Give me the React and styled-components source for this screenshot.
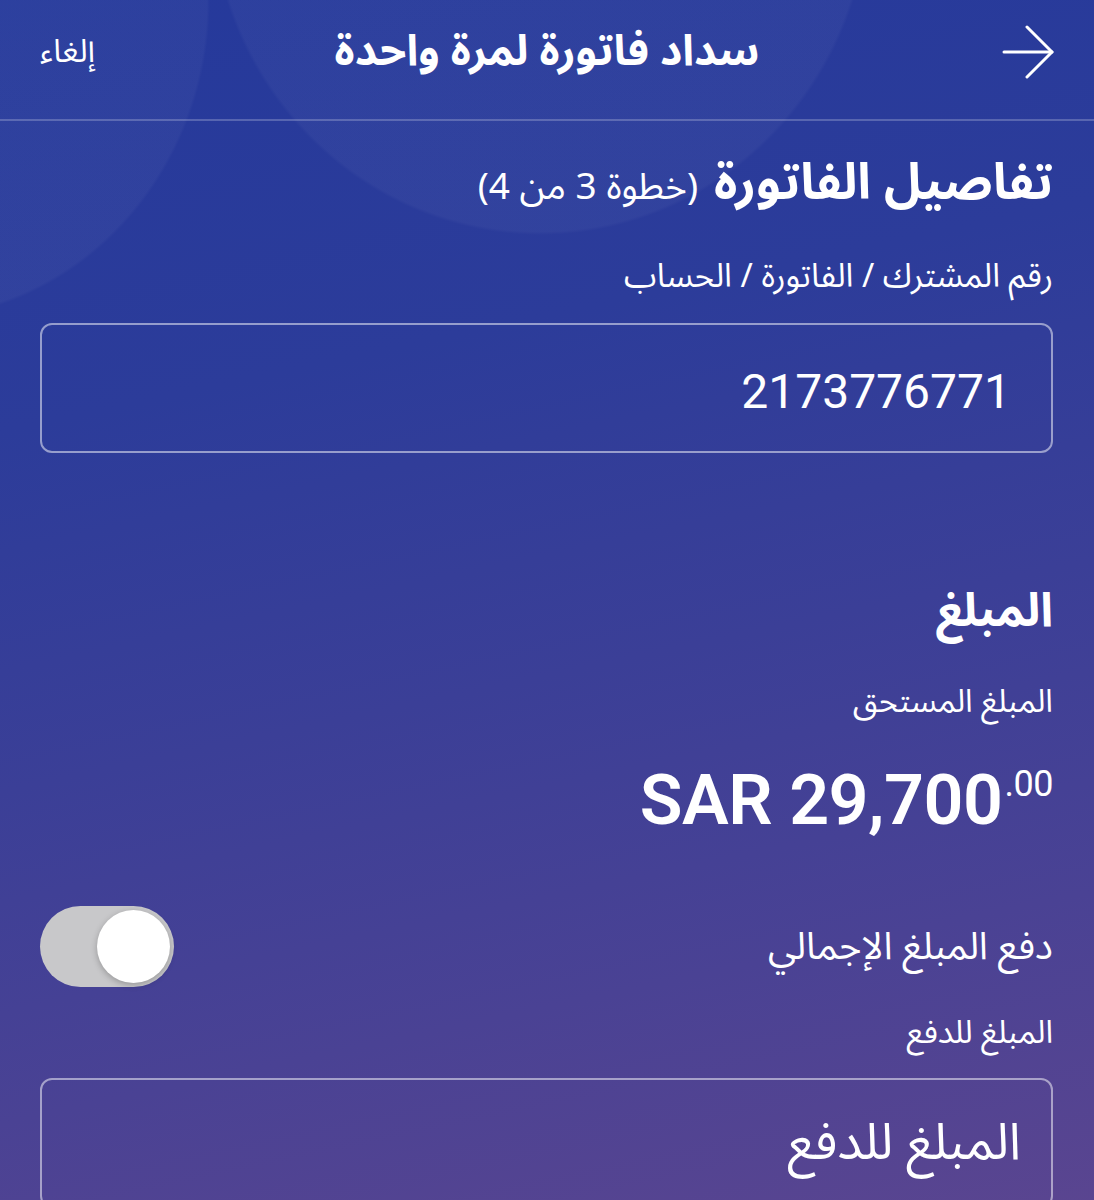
import React from 'react';
import styled, { createGlobalStyle } from 'styled-components';

const arabic = `"Noto Sans Arabic", "Noto Naskh Arabic", "DejaVu Sans", sans-serif`;

const GlobalStyle = createGlobalStyle`
    html, body {
        margin: 0;
        padding: 0;
        background: #3a3f98;
    }
    * {
        box-sizing: border-box;
    }
`;

const Screen = styled.div`
    direction: rtl;
    position: relative;
    overflow: hidden;
    width: 1094px;
    min-height: 1200px;
    color: #ffffff;
    font-family: ${arabic};
    background:
        radial-gradient(ellipse 330px 340px at 540px -105px, rgba(255,255,255,0.035) 0 99%, transparent 100%),
        radial-gradient(ellipse 300px 320px at -90px 0px, rgba(255,255,255,0.035) 0 99%, transparent 100%),
        linear-gradient(168deg, #25399b 0%, #2c3c9a 30%, #3b3f97 55%, #4a4294 78%, #5a4590 100%);
`;

const Header = styled.header`
    display: grid;
    grid-template-columns: 1fr auto 1fr;
    align-items: center;
    height: 121px;
    padding: 0 40px 16px;
    border-bottom: 2px solid rgba(255, 255, 255, 0.22);
`;

const BackButton = styled.button`
    justify-self: start;
    display: flex;
    padding: 0;
    border: none;
    background: none;
    color: #ffffff;
    cursor: pointer;
`;

const Title = styled.h1`
    margin: 0;
    font-size: 43px;
    font-weight: 700;
    line-height: 1;
`;

const Cancel = styled.button`
    justify-self: end;
    padding: 0;
    border: none;
    background: none;
    color: #ffffff;
    font-family: ${arabic};
    font-size: 32px;
    cursor: pointer;
`;

const Content = styled.main`
    padding: 0 41px 0 40px;
`;

const SectionTitle = styled.h2`
    margin: ${p => p.$top}px 0 0;
    font-size: ${p => p.$size || 50}px;
    font-weight: 700;
    line-height: ${p => p.$lh || 64}px;
`;

const Step = styled.span`
    font-size: 37px;
    font-weight: 400;
    margin-right: 16px;
`;

const Label = styled.div`
    margin-top: ${p => p.$top}px;
    font-size: ${p => p.$size || 32}px;
    line-height: 40px;
`;

const Field = styled.div`
    display: flex;
    align-items: center;
    margin-top: ${p => p.$top}px;
    height: 130px;
    padding: ${p => p.$padTop || 0}px ${p => p.$pad}px 0;
    border: 2px solid rgba(255, 255, 255, 0.5);
    border-radius: 12px;
`;

const FieldValue = styled.span`
    font-family: Roboto, "Liberation Sans", sans-serif;
    font-size: 48px;
    font-weight: 400;
    direction: ltr;
`;

const Placeholder = styled.span`
    font-size: 51px;
    color: #ffffff;
`;

const Amount = styled.div`
    display: flex;
    justify-content: flex-start;
    margin-top: 38px;
    line-height: 80px;
`;

const AmountText = styled.span`
    direction: ltr;
    display: inline-flex;
    align-items: flex-start;
    font-family: Roboto, "Liberation Sans", sans-serif;
    font-size: 70px;
    font-weight: 600;
    letter-spacing: -0.5px;
`;

const Cents = styled.sup`
    font-size: 36px;
    font-weight: 400;
    line-height: 1;
    margin-top: 6px;
    margin-left: 2px;
`;

const ToggleRow = styled.div`
    display: flex;
    align-items: center;
    justify-content: space-between;
    margin-top: 66px;
    height: 81px;
`;

const ToggleLabel = styled.span`
    font-size: 38px;
`;

const Track = styled.div`
    display: flex;
    justify-content: ${p => (p.$on ? 'flex-start' : 'flex-end')};
    align-items: center;
    width: 134px;
    height: 81px;
    padding: 4px;
    border-radius: 41px;
    background: ${p => (p.$on ? '#4cd964' : '#c8c8ca')};
    direction: ltr;
`;

const Knob = styled.div`
    width: 73px;
    height: 73px;
    border-radius: 50%;
    background: #ffffff;
    box-shadow: 0 2px 6px rgba(0, 0, 0, 0.25);
`;

function ArrowIcon() {
    return (
        <svg width="56" height="56" viewBox="0 0 56 56" fill="none" stroke="currentColor"
            strokeWidth="3" strokeLinecap="round" strokeLinejoin="round">
            <path d="M6 28 H54" />
            <path d="M29 3 L54 28 L29 53" />
        </svg>
    );
}

export default function App() {
    return (
        <React.Fragment>
            <GlobalStyle />
            <Screen>
                <Header>
                    <BackButton aria-label="رجوع"><ArrowIcon /></BackButton>
                    <Title>سداد فاتورة لمرة واحدة</Title>
                    <Cancel>إلغاء</Cancel>
                </Header>
                <Content>
                    <SectionTitle $top={30}>
                        تفاصيل الفاتورة<Step>(خطوة 3 من 4)</Step>
                    </SectionTitle>
                    <Label $top={38} $size={33}>رقم المشترك / الفاتورة / الحساب</Label>
                    <Field $top={26} $pad={40} $padTop={6}>
                        <FieldValue>2173776771</FieldValue>
                    </Field>

                    <SectionTitle $top={128} $lh={60} $size={47}>المبلغ</SectionTitle>
                    <Label $top={41}>المبلغ المستحق</Label>
                    <Amount>
                        <AmountText>SAR 29,700<Cents>.00</Cents></AmountText>
                    </Amount>

                    <ToggleRow>
                        <ToggleLabel>دفع المبلغ الإجمالي</ToggleLabel>
                        <Track $on={false}><Knob /></Track>
                    </ToggleRow>

                    <Label $top={26}>المبلغ للدفع</Label>
                    <Field $top={25} $pad={30}>
                        <Placeholder>المبلغ للدفع</Placeholder>
                    </Field>
                </Content>
            </Screen>
        </React.Fragment>
    );
}
